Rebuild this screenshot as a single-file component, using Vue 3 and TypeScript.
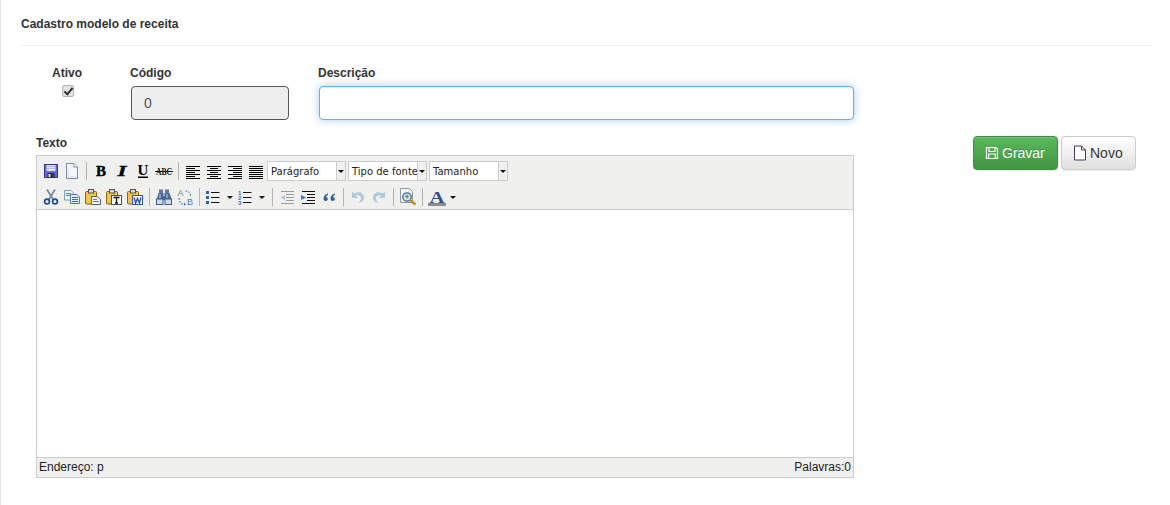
<script setup lang="ts">
const ys = [3, 5, 7, 9, 11, 13, 15]
function lines(kind: number): { x1: number; x2: number; y: number }[] {
  return ys.map((y, i) => {
    const long = i % 2 === 0
    if (kind === 0) return { x1: 1, x2: long ? 15 : 10, y }
    if (kind === 1) return { x1: long ? 1 : 4, x2: long ? 15 : 12, y }
    if (kind === 2) return { x1: long ? 1 : 6, x2: 15, y }
    return { x1: 1, x2: 15, y }
  })
}
</script>

<template>
  <div class="page">
    <h1 class="title">Cadastro modelo de receita</h1>
    <div class="rule"></div>

    <div class="fields">
      <div class="f-ativo">
        <label class="lbl">Ativo</label>
        <input class="check" type="checkbox" checked />
      </div>
      <div class="f-codigo">
        <label class="lbl">Código</label>
        <input class="inp readonly" type="text" value="0" readonly />
      </div>
      <div class="f-desc">
        <label class="lbl">Descrição</label>
        <input class="inp focus" type="text" />
      </div>
    </div>

    <div class="lower">
      <div class="editor-col">
        <label class="lbl texto">Texto</label>
        <div class="editor">
          <div class="toolbar">
            <div class="row">
              <span class="btn"><svg viewBox="0 0 16 16" width="16" height="16"><rect x="1.500" y="1.500" width="13" height="13" fill="#6468cf" stroke="#34368f"/><rect x="3.500" y="2" width="9" height="6" fill="#dfe3f6"/><path d="M4 3.500h8M4 5.500h8" stroke="#b6bde6"/><rect x="4.500" y="10" width="7" height="5" fill="#2d2f52"/><rect x="5.500" y="11" width="2" height="3" fill="#d6d8e8"/></svg></span>
              <span class="btn"><svg viewBox="0 0 16 16" width="16" height="16"><path d="M2.500 .5h7.500l3.500 3.500v11.500H2.500z" fill="#f2f6fd" stroke="#7f8ea8"/><path d="M10 .5V4h3.500" fill="#fff" stroke="#7f8ea8"/><path d="M4 6v8h8" fill="none" stroke="#d5e0f1"/></svg></span>
              <span class="sep"></span>
              <span class="btn"><svg viewBox="0 0 16 16" width="16" height="16"><text x="8" y="13" text-anchor="middle" font-family="Liberation Serif" font-weight="700" font-size="15" fill="#000" stroke="#000" stroke-width=".4">B</text></svg></span>
              <span class="btn"><svg viewBox="0 0 16 16" width="16" height="16"><text x="8" y="13" text-anchor="middle" font-family="Liberation Serif" font-weight="700" font-style="italic" font-size="15" textLength="9" lengthAdjust="spacingAndGlyphs" fill="#000" stroke="#000" stroke-width=".3">I</text></svg></span>
              <span class="btn"><svg viewBox="0 0 16 16" width="16" height="16"><text x="8" y="12" text-anchor="middle" font-family="Liberation Serif" font-weight="700" font-size="15" fill="#000">U</text><rect x="3" y="13.500" width="10" height="1.500" fill="#000"/></svg></span>
              <span class="btn"><svg viewBox="0 0 18 16" width="18" height="16"><text x="1" y="11.500" font-family="Liberation Serif" font-weight="700" font-size="10" textLength="16" lengthAdjust="spacingAndGlyphs" fill="#111">ABC</text><rect x="0" y="8" width="18" height="1" fill="#111"/></svg></span>
              <span class="sep"></span>
              <span v-for="k in [0, 1, 2, 3]" :key="k" class="btn"><svg viewBox="0 0 16 16" width="16" height="16"><line v-for="l in lines(k)" :key="l.y" :x1="l.x1" :x2="l.x2" :y1="l.y + .5" :y2="l.y + .5" stroke="#000"/></svg></span>
              <span class="select s1"><span class="sel-text">Parágrafo</span><span class="sel-arrow"></span></span>
              <span class="select s2"><span class="sel-text">Tipo de fonte</span><span class="sel-arrow"></span></span>
              <span class="select s3"><span class="sel-text">Tamanho</span><span class="sel-arrow"></span></span>
            </div>
            <div class="row">
              <span class="btn"><svg viewBox="0 0 16 16" width="16" height="16"><path d="M4 .5l5.500 9M12 .5L6.500 9.500" fill="none" stroke="#7f8794" stroke-width="1.700"/><circle cx="4" cy="12.500" r="2.400" fill="none" stroke="#1d4f96" stroke-width="1.700"/><circle cx="12" cy="12.500" r="2.400" fill="none" stroke="#1d4f96" stroke-width="1.700"/><path d="M6.500 9.500L5 10.800M9.500 9.500l1.500 1.300" stroke="#1d4f96" stroke-width="1.400"/></svg></span>
              <span class="btn"><svg viewBox="0 0 16 16" width="16" height="16"><path d="M.5 1.500h6.500l2 2v7.500H.5z" fill="#f4f8fe" stroke="#7d9cc4"/><path d="M2 4.500h5M2 6.500h5" stroke="#4a78b5"/><path d="M6.500 5.500h6.500l2.500 2.500v6.500h-9z" fill="#e5effb" stroke="#4f7cb8"/><path d="M8 8.500h6M8 10.500h6M8 12.500h6" stroke="#3a6db0"/></svg></span>
              <span class="btn"><svg viewBox="0 0 16 16" width="16" height="16"><rect x=".5" y="2.500" width="11" height="12.500" rx="1" fill="#f0c64a" stroke="#86651a"/><rect x="3.500" y=".5" width="5" height="3.500" fill="#d7d7d7" stroke="#555"/><path d="M6.500 7.500h5.500l3.500 3v5h-9z" fill="#f6f7fb" stroke="#5c6070"/><path d="M8 10.500h4M8 12.500h6" stroke="#6b6f80"/></svg></span>
              <span class="btn"><svg viewBox="0 0 16 16" width="16" height="16"><rect x=".5" y="2.500" width="11" height="12.500" rx="1" fill="#f0c64a" stroke="#86651a"/><rect x="3.500" y=".5" width="5" height="3.500" fill="#d7d7d7" stroke="#555"/><rect x="5.500" y="6.500" width="10" height="9" fill="#f6f7fb" stroke="#4a4d5c"/><path d="M7.500 8.500h6M10.500 8.500v5.500M9 14h3" stroke="#111" stroke-width="1.300"/></svg></span>
              <span class="btn"><svg viewBox="0 0 16 16" width="16" height="16"><rect x=".5" y="2.500" width="11" height="12.500" rx="1" fill="#f0c64a" stroke="#86651a"/><rect x="3.500" y=".5" width="5" height="3.500" fill="#d7d7d7" stroke="#555"/><rect x="5.500" y="6.500" width="10" height="9" fill="#f6f7fb" stroke="#2d5da8"/><path d="M7 8.500l1.600 5.500 1.900-4.500 1.900 4.500L14 8.500" fill="none" stroke="#1f4fa5" stroke-width="1.300"/></svg></span>
              <span class="sep"></span>
              <span class="btn"><svg viewBox="0 0 16 16" width="16" height="16"><rect x="3" y="0.500" width="4" height="4" fill="#5a7aa8"/><rect x="9" y="0.500" width="4" height="4" fill="#5a7aa8"/><path d="M2.500 4h5v3h1V4h5l2.500 7H.5z" fill="#4a6a9a"/><path d="M4 5v4M11 5v4" stroke="#c5d4ea"/><rect x=".5" y="10" width="6.500" height="5.500" fill="#cdd9ec" stroke="#3f5f8f"/><rect x="9" y="10" width="6.500" height="5.500" fill="#cdd9ec" stroke="#3f5f8f"/></svg></span>
              <span class="btn"><svg viewBox="0 0 18 18" width="18" height="18"><text x="1.500" y="8" font-size="9" font-family="Liberation Sans" fill="#6d7f96">A</text><text x="11" y="17" font-size="9" font-family="Liberation Sans" fill="#3b82d0">B</text><path d="M3 10c0 4 2 6 5 6.500M9.500 3c3 0 5 1.500 5 5" fill="none" stroke="#3377c8" stroke-width="1.200" stroke-dasharray="1.500 1.500"/><path d="M8 14.500l2 2-2 1z" fill="#3377c8"/></svg></span>
              <span class="sep"></span>
              <span class="btn split"><svg viewBox="0 0 16 16" width="16" height="16"><g fill="#34629f"><rect x="1" y="2" width="3" height="3"/><rect x="1" y="7" width="3" height="3"/><rect x="1" y="12" width="3" height="3"/></g><path d="M6 3.500h8.500M6 8.500h8.500M6 13.500h8.500" stroke="#111"/></svg><span class="arrow"></span></span>
              <span class="btn split"><svg viewBox="0 0 16 16" width="16" height="16"><text x="1" y="5.500" font-size="6" font-weight="700" font-family="Liberation Sans" fill="#2f6fc0">1</text><text x="1" y="10.500" font-size="6" font-weight="700" font-family="Liberation Sans" fill="#2f6fc0">2</text><text x="1" y="15.500" font-size="6" font-weight="700" font-family="Liberation Sans" fill="#2f6fc0">3</text><path d="M6 3.500h8.500M6 8.500h8.500M6 13.500h8.500" stroke="#111"/></svg><span class="arrow"></span></span>
              <span class="sep"></span>
              <span class="btn"><svg viewBox="0 0 16 16" width="16" height="16"><path d="M2 2.500h13M7 5.500h8M7 8.500h8M7 11.500h8M2 14.500h13" stroke="#9a9a9a"/><path d="M6 6L2 8.500 6 11z" fill="#a8c4e8"/></svg></span>
              <span class="btn"><svg viewBox="0 0 16 16" width="16" height="16"><path d="M2 2.500h13M7 5.500h8M7 8.500h8M7 11.500h8M2 14.500h13" stroke="#111"/><path d="M1 6L6 8.500 1 11z" fill="#2e78d6"/></svg></span>
              <span class="btn"><svg viewBox="0 0 16 16" width="16" height="16"><path d="M7 4.500C4.500 5 2.500 7 2.500 9.500c0 1.500.9 2.500 2.200 2.500 1.200 0 2.100-.9 2.100-2 0-1.100-.8-1.900-1.900-1.900.3-.9 1-1.700 2.100-2.100zM14 4.500c-2.500.5-4.500 2.500-4.500 5 0 1.500.9 2.500 2.200 2.500 1.200 0 2.100-.9 2.100-2 0-1.100-.8-1.900-1.900-1.900.3-.9 1-1.700 2.100-2.100z" fill="#2f5f9e"/></svg></span>
              <span class="sep"></span>
              <span class="btn"><svg viewBox="0 0 16 16" width="16" height="16"><path d="M2 3v6h6L5.800 6.800c2.700-1.300 5.500.2 5.200 3-.2 1.700-1.300 3-3 3.700 4 .4 6.300-2.300 6-5.500C13.600 3.700 8.800 2 5 4.500z" fill="#b3c6df"/></svg></span>
              <span class="btn"><svg viewBox="0 0 16 16" width="16" height="16"><path d="M14 3v6H8l2.200-2.200C7.500 5.500 4.700 7 5 9.800c.2 1.700 1.300 3 3 3.700-4 .4-6.300-2.300-6-5.500C2.400 3.700 7.200 2 11 4.500z" fill="#b3c6df"/></svg></span>
              <span class="sep"></span>
              <span class="btn"><svg viewBox="0 0 18 18" width="18" height="18"><path d="M1.500 .5h9l3 3v11h-12z" fill="#f5f7fb" stroke="#8b97a8"/><circle cx="8" cy="9" r="4.200" fill="#cfe3ee" stroke="#4a6585" stroke-width="1.300"/><path d="M6 8.500l2-2 2 2-2 2z" fill="#4f9a78"/><path d="M11 12l5.500 4.500" stroke="#c98a2e" stroke-width="2.600"/></svg></span>
              <span class="sep"></span>
              <span class="btn color"><svg viewBox="0 0 18 18" width="18" height="18"><text x="9" y="14.500" text-anchor="middle" font-family="Liberation Serif" font-weight="700" font-size="17" textLength="15" lengthAdjust="spacingAndGlyphs" fill="#2c4f8f">A</text><rect x="0" y="15" width="18" height="3" fill="#8c8c8c"/></svg><span class="arrow"></span></span>
            </div>
          </div>
          <div class="area"></div>
          <div class="status"><span>Endereço: p</span><span>Palavras:0</span></div>
        </div>
      </div>
      <div class="actions">
        <button class="b green" type="button"><svg viewBox="0 0 14 14" width="14" height="14"><path d="M1.500 1.500h9.500l1.500 1.500v9.500h-11z" fill="none" stroke="#fff" stroke-width="1.200"/><path d="M4 2v3.500h6V2M3.700 12.500V8h6.600v4.500" fill="none" stroke="#fff" stroke-width="1.200"/></svg>Gravar</button>
        <button class="b light" type="button"><svg viewBox="0 0 14 16" width="14" height="16"><path d="M1.500 1h7l4 4v10h-11z" fill="#fff" stroke="#4b3a5c"/><path d="M8.500 1v4h4" fill="none" stroke="#4b3a5c"/></svg>Novo</button>
      </div>
    </div>
  </div>
</template>

<style>
html, body { margin: 0; background: #fff; }
</style>

<style scoped>
.page {
  box-sizing: border-box;
  width: 1170px;
  height: 505px;
  overflow: hidden;
  padding: 0 18px 0 20px;
  border-left: 1px solid #e7e7e7;
  font-family: "Liberation Sans", Arial, sans-serif;
  color: #333;
}
.title {
  margin: 0;
  padding-top: 17px;
  height: 45px;
  box-sizing: border-box;
  font-size: 12px;
  line-height: 15px;
  font-weight: 700;
  color: #333;
}
.rule { height: 1px; background: #eee; }
.fields {
  display: flex;
  padding-top: 19px;
  height: 87px;
  box-sizing: border-box;
}
.lbl {
  display: block;
  font-size: 12px;
  line-height: 17px;
  font-weight: 700;
  color: #333;
}
.f-ativo {
  width: 109px;
  padding-left: 31px;
  box-sizing: border-box;
  display: flex;
  flex-direction: column;
}
.check {
  appearance: none;
  box-sizing: border-box;
  position: relative;
  margin: 3px 0 0 10px;
  width: 12px;
  height: 12px;
  border: 1px solid #b4b4b4;
  border-radius: 2px;
  background: #e2e2e2;
}
.check::after {
  content: "";
  position: absolute;
  left: 3px;
  top: 0;
  width: 3px;
  height: 7px;
  border: solid #333;
  border-width: 0 2px 2px 0;
  transform: rotate(40deg);
}
.f-codigo { width: 188px; }
.f-desc { width: 536px; }
.inp {
  display: block;
  box-sizing: border-box;
  height: 34px;
  margin: 4px 0 0 1px;
  padding: 0 12px;
  font: 14px "Liberation Sans", Arial, sans-serif;
  color: #555;
  border-radius: 4px;
  outline: none;
}
.readonly {
  width: 158px;
  background: #eee;
  border: 1px solid #555;
}
.focus {
  width: 535px;
  background: #fff;
  border: 1px solid #66afe9;
  box-shadow: inset 0 1px 1px rgba(0,0,0,.075), 0 0 8px rgba(102,175,233,.6);
}
.lower { display: flex; margin-top: 2px; }
.editor-col { padding-left: 15px; width: 833px; box-sizing: border-box; }
.texto { height: 17px; }
.editor {
  box-sizing: border-box;
  width: 818px;
  height: 323px;
  margin-top: 3px;
  border: 1px solid #ccc;
  display: flex;
  flex-direction: column;
}
.toolbar {
  background: #f0f0ee;
  border-bottom: 1px solid #ccc;
  height: 54px;
  flex: none;
  box-sizing: border-box;
  padding: 2px 0 0 3px;
}
.row { display: flex; align-items: center; height: 26px; }
.btn {
  width: 21px;
  height: 20px;
  display: flex;
  align-items: center;
  justify-content: center;
  flex: none;
}
.btn svg { flex: none; overflow: visible; }
.btn.split { width: 32.500px; justify-content: flex-start; padding-left: 1.500px; box-sizing: border-box; gap: 6px; }
.btn.color { width: 34px; justify-content: flex-start; padding-left: 2px; box-sizing: border-box; gap: 4px; }
.arrow {
  width: 0; height: 0;
  border-left: 3px solid transparent;
  border-right: 3px solid transparent;
  border-top: 3px solid #111;
  flex: none;
}
.sep {
  width: 1px;
  height: 18px;
  margin: 0 3.500px;
  background: #b5b5b5;
  flex: none;
}
.select {
  display: flex;
  box-sizing: border-box;
  width: 79px;
  height: 20px;
  border: 1px solid #ccc;
  background: #fff;
  margin-right: 2px;
  color: #222;
  flex: none;
}
.s1 { margin-left: 1px; }
.sel-text {
  flex: 1;
  min-width: 0;
  white-space: nowrap;
  padding-left: 3px;
  line-height: 20px;
  font-family: "DejaVu Sans", sans-serif;
  font-size: 10px;
}
.sel-arrow {
  width: 8px;
  background: #f0f0ee;
  border-left: 1px solid #ccc;
  position: relative;
  flex: none;
}
.sel-arrow::after {
  content: "";
  position: absolute;
  left: 1px;
  top: 8px;
  border-left: 3px solid transparent;
  border-right: 3px solid transparent;
  border-top: 3px solid #111;
}
.area { flex: 1; background: #fff; }
.status {
  height: 20px;
  flex: none;
  background: #f0f0ee;
  border-top: 1px solid #ccc;
  box-sizing: border-box;
  display: flex;
  justify-content: space-between;
  padding: 0 2px;
  font-size: 12px;
  line-height: 19px;
  color: #222;
}
.actions { display: flex; gap: 3px; padding: 1px 0 0 119px; align-items: flex-start; }
.b {
  box-sizing: border-box;
  height: 34px;
  padding: 0 11px;
  border-radius: 4px;
  font: 14px "Liberation Sans", Arial, sans-serif;
  display: flex;
  align-items: center;
  gap: 3px;
  white-space: nowrap;
}
.green {
  width: 85px;
  color: #fff;
  border: 1px solid #3e8f3e;
  background: linear-gradient(#5cb85c, #419641);
  text-shadow: 0 -1px 0 rgba(0,0,0,.2);
  box-shadow: inset 0 1px 0 rgba(255,255,255,.15), 0 1px 1px rgba(0,0,0,.075);
}
.light {
  width: 75px;
  color: #333;
  border: 1px solid #ccc;
  background: linear-gradient(#fff, #e0e0e0);
  text-shadow: 0 1px 0 #fff;
  box-shadow: inset 0 1px 0 rgba(255,255,255,.15), 0 1px 1px rgba(0,0,0,.075);
}
</style>
